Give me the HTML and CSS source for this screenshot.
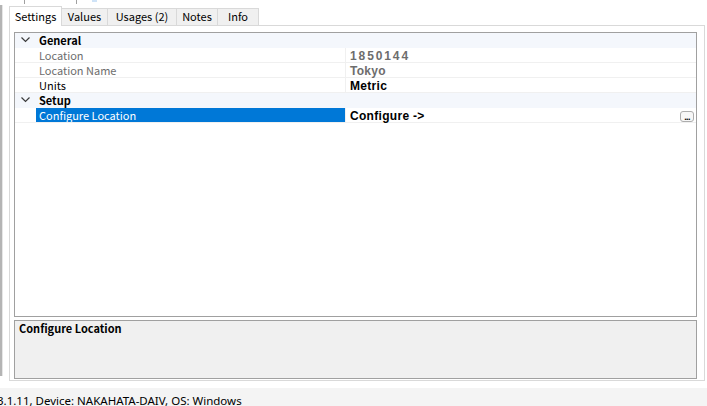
FILE: index.html
```html
<!DOCTYPE html>
<html>
<head>
<meta charset="utf-8">
<link rel="stylesheet" href="styles.css">
</head>
<body>
<div class="top"><span class="tick t1"></span><span class="tick t2"></span><span class="blue"></span></div>
<div class="main">
  <div class="edge"></div>
  <div class="tabctl">
    <div class="tabs">
      <div class="tab active w1">Settings</div>
      <div class="tab w2">Values</div>
      <div class="tab w3">Usages (2)</div>
      <div class="tab w4">Notes</div>
      <div class="tab w5">Info</div>
    </div>
    <div class="page">
      <div class="grid">
        <div class="row cat">
          <span class="gut"><svg class="chev" width="9" height="6" viewBox="0 0 9 6"><path d="M0.5 0.5 L4.5 4.5 L8.5 0.5" fill="none" stroke="#3c3c3c" stroke-width="1.2"/></svg></span>
          <span class="catname">General</span>
        </div>
        <div class="row">
          <span class="gut"></span>
          <span class="label dis">Location</span>
          <span class="val dis num">1850144</span>
        </div>
        <div class="row">
          <span class="gut"></span>
          <span class="label dis">Location Name</span>
          <span class="val dis">Tokyo</span>
        </div>
        <div class="row">
          <span class="gut"></span>
          <span class="label">Units</span>
          <span class="val">Metric</span>
        </div>
        <div class="row cat">
          <span class="gut"><svg class="chev" width="9" height="6" viewBox="0 0 9 6"><path d="M0.5 0.5 L4.5 4.5 L8.5 0.5" fill="none" stroke="#3c3c3c" stroke-width="1.2"/></svg></span>
          <span class="catname">Setup</span>
        </div>
        <div class="row">
          <span class="gut"></span>
          <span class="label sel">Configure Location</span>
          <span class="val"><span class="vtext">Configure -&gt;</span><span class="ell">...</span></span>
        </div>
      </div>
      <div class="desc"><span class="desctitle">Configure Location</span></div>
    </div>
  </div>
</div>
<div class="status">3.1.11, Device: NAKAHATA-DAIV, OS: Windows</div>
</body>
</html>
```
FILE: styles.css
```css
html, body {
  margin: 0;
  padding: 0;
  background: #ffffff;
  width: 707px;
  height: 406px;
  overflow: hidden;
  font-family: "Noto Sans CJK JP", "Noto Sans", sans-serif;
  font-size: 11px;
  color: #000;
}

.top {
  height: 5px;
  display: flex;
}
.tick {
  width: 1px;
  height: 4px;
  background: #a0a0a0;
}
.t1 { margin-left: 24px; }
.t2 { margin-left: 51px; }
.blue {
  margin-left: 15px;
  width: 5px;
  height: 2px;
  background: #cfe3f7;
}

.main {
  display: flex;
  height: 376px;
}
.edge {
  width: 3px;
  height: 371px;
  background: #b4b4b4;
  border-right: 1px solid #e6e6e6;
  box-sizing: border-box;
}
.tabctl {
  margin-left: 6px;
  display: flex;
  flex-direction: column;
}

.tabs {
  display: flex;
  align-items: flex-end;
  height: 20px;
}
.tab {
  box-sizing: border-box;
  height: 17px;
  background: #f0f0f0;
  border: 1px solid #d9d9d9;
  border-bottom: none;
  border-left: none;
  text-align: center;
  line-height: 15px;
  color: #000;
}
.tab.active {
  height: 20px;
  background: #ffffff;
  border-left: 1px solid #d9d9d9;
  line-height: 18px;
  margin-bottom: -1px;
  position: relative;
  z-index: 1;
}
.w1 { width: 53px; }
.w2 { width: 46px; }
.w3 { width: 69px; }
.w4 { width: 41px; }
.w5 { width: 41px; }

.page {
  box-sizing: border-box;
  width: 696px;
  height: 356px;
  border: 1px solid #d9d9d9;
  background: #ffffff;
  padding: 6px 0 0 4px;
  display: flex;
  flex-direction: column;
  gap: 3px;
}

.grid {
  box-sizing: border-box;
  width: 683px;
  height: 285px;
  border: 1px solid #a0a0a0;
  background: #ffffff;
}
.row {
  display: flex;
  height: 14px;
  border-bottom: 1px solid #f0f0f0;
}
.row > span {
  box-sizing: border-box;
  height: 14px;
  padding-top: 1px;
  line-height: 13px;
  white-space: nowrap;
}
.row > .gut {
  width: 21px;
  flex: none;
  display: flex;
  align-items: center;
  justify-content: center;
  padding-top: 0;
}
.chev { display: block; margin-left: -1px; }
.cat {
  background: #f4f7fc;
  border-bottom-color: #f4f7fc;
}
.catname {
  font-weight: bold;
  padding-left: 3px;
}
.label {
  width: 310px;
  flex: none;
  padding-left: 3px;
  border-right: 1px solid #f0f0f0;
  overflow: hidden;
}
.label.dis { color: #6d6d6d; }
.label.sel {
  background: #0078d7;
  color: #ffffff;
}
.row > .val {
  flex: 1;
  display: flex;
  align-items: flex-start;
  padding-top: 2px;
  padding-left: 4px;
  font-family: "Liberation Sans", Arial, sans-serif;
  font-weight: bold;
  font-size: 12px;
  letter-spacing: 0.3px;
  line-height: 12px;
}
.val.dis { color: #6d6d6d; }
.val.num { letter-spacing: 1.9px; }
.vtext { line-height: 12px; }
.ell {
  margin-left: auto;
  margin-right: 2px;
  margin-top: 1px;
  box-sizing: border-box;
  width: 14px;
  height: 11px;
  border: 1px solid #adadad;
  border-radius: 3px;
  background: #f7f7f7;
  font-size: 9px;
  line-height: 11px;
  text-align: center;
  letter-spacing: -0.6px;
  font-weight: bold;
  color: #000;
}

.desc {
  box-sizing: border-box;
  width: 683px;
  height: 59px;
  border: 1px solid #a0a0a0;
  background: #f0f0f0;
  padding: 1px 0 0 4px;
}
.desctitle {
  font-weight: bold;
  line-height: 13px;
  display: block;
}

.status {
  margin-top: 7px;
  height: 18px;
  background: #f4f4f4;
  font-family: "Noto Sans", sans-serif;
  font-size: 11.5px;
  line-height: 26px;
  text-indent: -3px;
  overflow: hidden;
  white-space: nowrap;
  color: #000;
}
```
